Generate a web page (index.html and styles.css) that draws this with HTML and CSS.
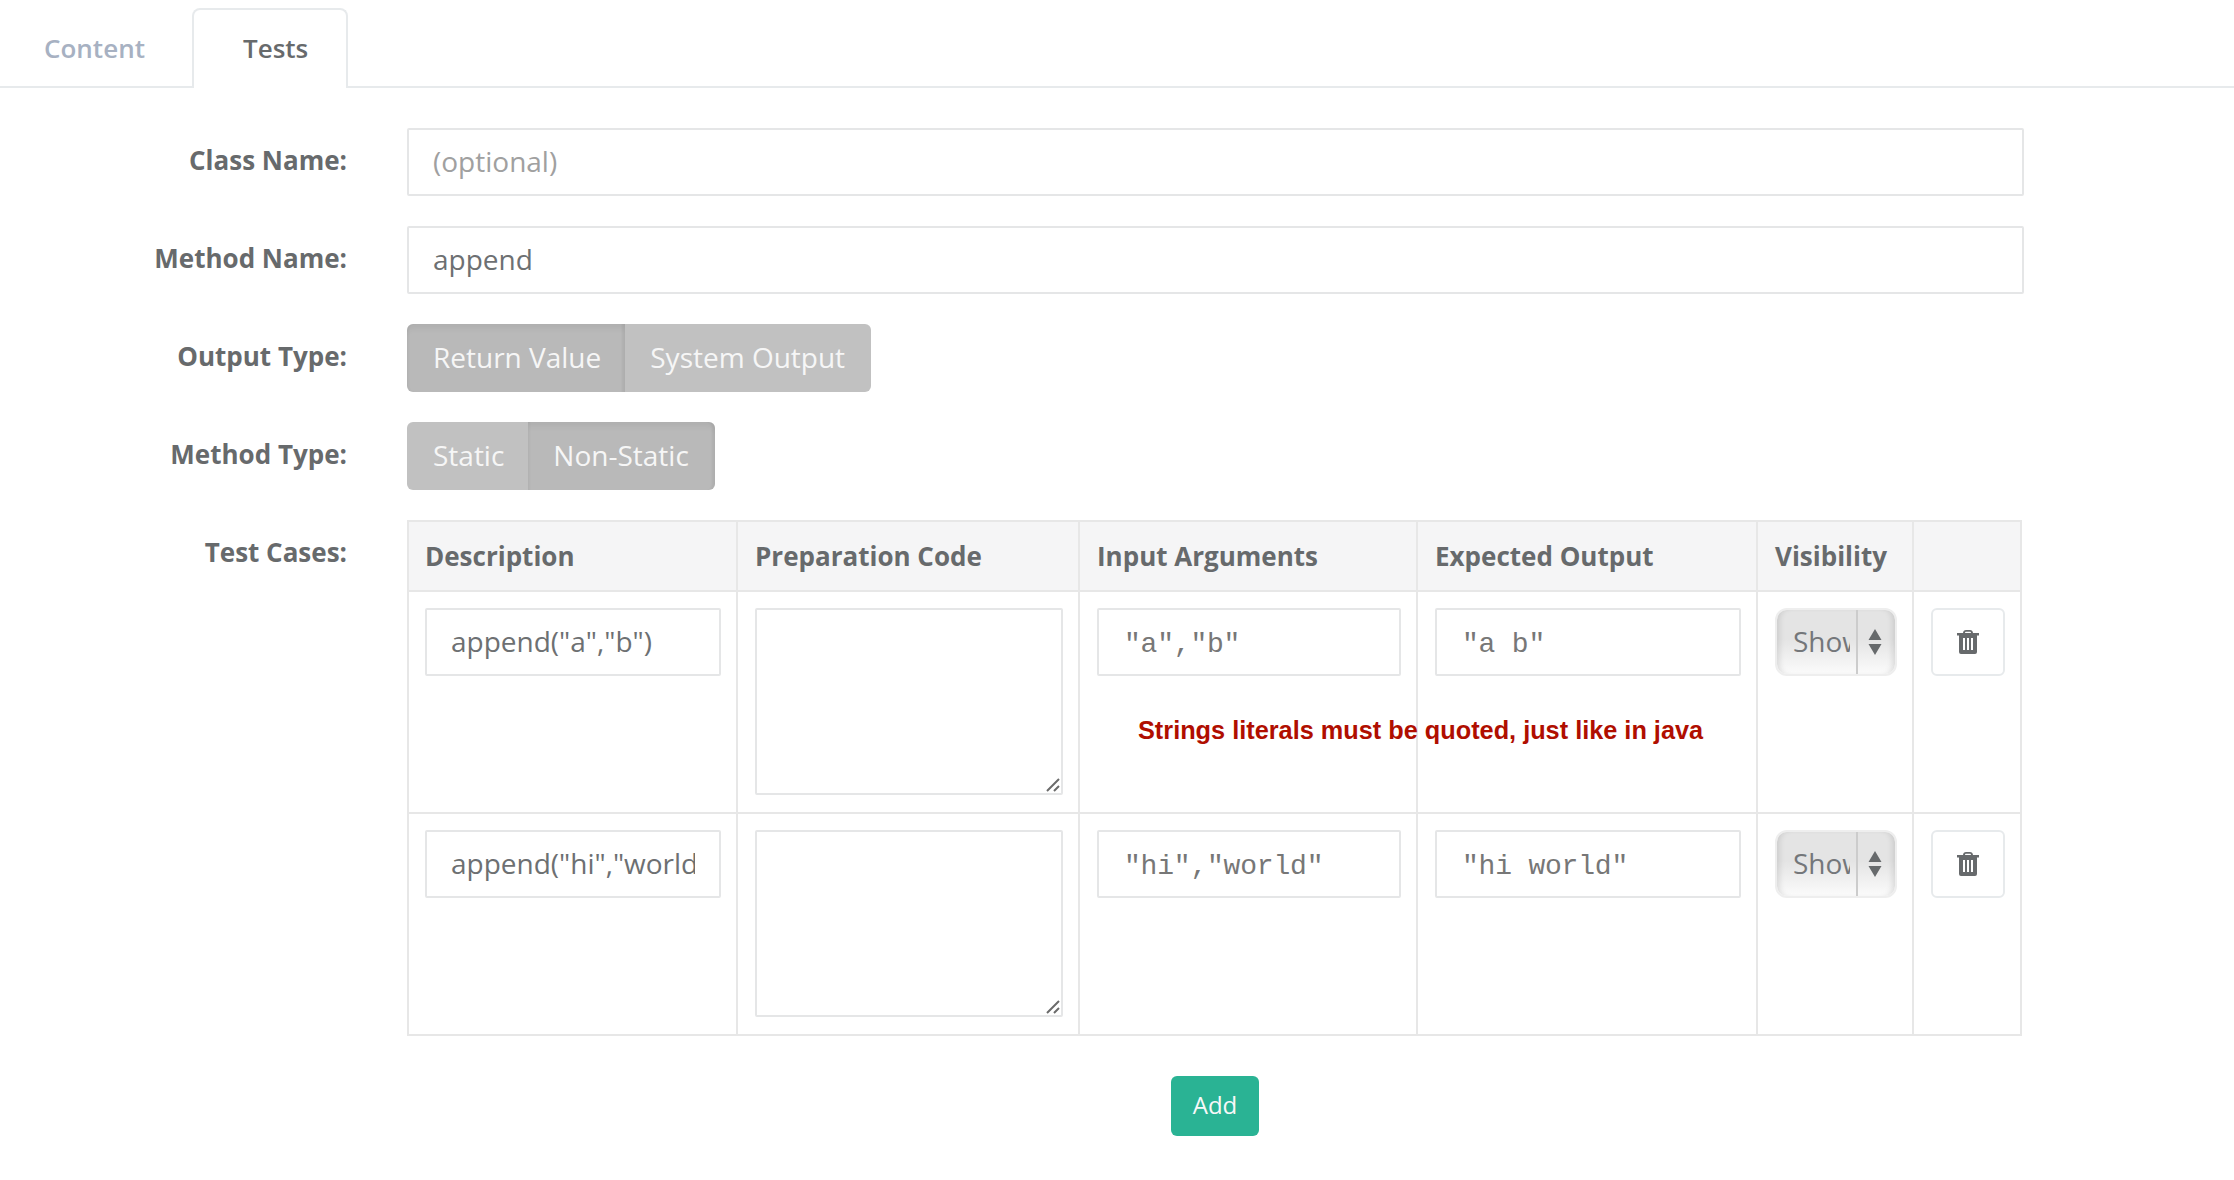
FILE: index.html
```html
<!DOCTYPE html>
<html lang="en">
<head>
  <meta charset="UTF-8" />
  <title>Tests</title>
  <link rel="stylesheet" href="styles.css">
</head>
<body>
  <ul class="tabs">
    <li class="tab">Content</li>
    <li class="tab active">Tests</li>
  </ul>

  <form class="test-form">
    <div class="form-row">
      <label class="form-label">Class Name:</label>
      <input type="text" class="form-input" placeholder="(optional)" />
    </div>
    <div class="form-row">
      <label class="form-label">Method Name:</label>
      <input type="text" class="form-input" value="append" />
    </div>
    <div class="form-row">
      <label class="form-label">Output Type:</label>
      <div class="btn-group">
        <span class="toggle selected">Return Value</span>
        <span class="toggle">System Output</span>
      </div>
    </div>
    <div class="form-row">
      <label class="form-label">Method Type:</label>
      <div class="btn-group">
        <span class="toggle">Static</span>
        <span class="toggle selected">Non-Static</span>
      </div>
    </div>
    <div class="form-row">
      <label class="form-label">Test Cases:</label>
      <table class="cases">
        <colgroup>
          <col class="col-desc" />
          <col class="col-prep" />
          <col class="col-args" />
          <col class="col-out" />
          <col class="col-vis" />
          <col class="col-del" />
        </colgroup>
        <thead>
          <tr>
            <th>Description</th>
            <th>Preparation Code</th>
            <th>Input Arguments</th>
            <th>Expected Output</th>
            <th>Visibility</th>
            <th></th>
          </tr>
        </thead>
        <tbody>
          <tr>
            <td><input type="text" class="cell-input" value='append("a","b")' /></td>
            <td>
              <div class="code-wrap">
                <textarea class="cell-code"></textarea>
                <svg class="grip" width="14" height="14" viewBox="0 0 14 14"><path d="M1 13L13 1M8 13l5-5" /></svg>
              </div>
            </td>
            <td class="args-cell">
              <input type="text" class="cell-input mono" value='"a","b"' />
              <span class="hint">Strings literals must be quoted, just like in java</span>
            </td>
            <td><input type="text" class="cell-input mono" value='"a b"' /></td>
            <td>
              <div class="vis-select">
                <span class="vis-value">Show</span>
                <span class="vis-arrows">
                  <svg width="14" height="26" viewBox="0 0 14 26"><path d="M7 0l6.500 11H.5zM7 26L.5 15h13z" /></svg>
                </span>
              </div>
            </td>
            <td>
              <button type="button" class="del-btn">
                <svg width="22" height="24" viewBox="0 0 22 24"><path fill-rule="evenodd" d="M6 3C6 1.200 7.500 0 9 0h4c1.500 0 3 1.200 3 3h6v2.500h-2V22a2 2 0 0 1-2 2H4a2 2 0 0 1-2-2V5.500H0V3zM8 3h6c0-.7-.5-1.200-1.200-1.200H9.200C8.500 1.800 8 2.300 8 3zM6 8v12h2V8zM10 8v12h2V8zM14 8v12h2V8z" /></svg>
              </button>
            </td>
          </tr>
          <tr>
            <td><input type="text" class="cell-input" value='append("hi","world")' /></td>
            <td>
              <div class="code-wrap">
                <textarea class="cell-code"></textarea>
                <svg class="grip" width="14" height="14" viewBox="0 0 14 14"><path d="M1 13L13 1M8 13l5-5" /></svg>
              </div>
            </td>
            <td><input type="text" class="cell-input mono" value='"hi","world"' /></td>
            <td><input type="text" class="cell-input mono" value='"hi world"' /></td>
            <td>
              <div class="vis-select">
                <span class="vis-value">Show</span>
                <span class="vis-arrows">
                  <svg width="14" height="26" viewBox="0 0 14 26"><path d="M7 0l6.500 11H.5zM7 26L.5 15h13z" /></svg>
                </span>
              </div>
            </td>
            <td>
              <button type="button" class="del-btn">
                <svg width="22" height="24" viewBox="0 0 22 24"><path fill-rule="evenodd" d="M6 3C6 1.200 7.500 0 9 0h4c1.500 0 3 1.200 3 3h6v2.500h-2V22a2 2 0 0 1-2 2H4a2 2 0 0 1-2-2V5.500H0V3zM8 3h6c0-.7-.5-1.200-1.200-1.200H9.200C8.500 1.800 8 2.300 8 3zM6 8v12h2V8zM10 8v12h2V8zM14 8v12h2V8z" /></svg>
              </button>
            </td>
          </tr>
        </tbody>
      </table>
    </div>
    <div class="form-actions">
      <button type="button" class="add-btn">Add</button>
    </div>
  </form>
</body>
</html>
```

FILE: styles.css
```css
* {
  box-sizing: border-box;
}
body {
  margin: 0;
  background: #fff;
  color: #676a6c;
  font-family: "Open Sans", sans-serif;
  font-size: 28px;
}
.tabs {
  display: flex;
  height: 88px;
  margin: 0;
  padding: 8px 0 0 0;
  list-style: none;
  border-bottom: 2px solid #e7eaec;
}
.tab {
  width: 192px;
  padding-top: 22px;
  padding-left: 44px;
  font-size: 26px;
  font-weight: 600;
  color: #a7b1c2;
}
.tab.active {
  width: 156px;
  height: 80px;
  padding-top: 20px;
  padding-left: 49px;
  color: #676a6c;
  background: #fff;
  border: 2px solid #e7eaec;
  border-bottom: 0;
  border-radius: 8px 8px 0 0;
}
.test-form {
  width: 2024px;
  padding-top: 40px;
}
.form-row {
  display: grid;
  grid-template-columns: 347px 1fr;
  column-gap: 60px;
  margin-bottom: 30px;
}
.form-label {
  padding-top: 14px;
  text-align: right;
  font-size: 26px;
  font-weight: 700;
  line-height: 36px;
}
.form-input,
.cell-input {
  width: 100%;
  height: 68px;
  padding: 0 24px 2px;
  font-family: inherit;
  font-size: 28px;
  color: #6d7072;
  border: 2px solid #e5e6e7;
  border-radius: 2px;
  outline: none;
}
.form-input::placeholder {
  color: #a0a0a0;
}
.btn-group {
  display: flex;
  height: 68px;
}
.toggle {
  display: flex;
  align-items: center;
  padding: 0 25px 2px;
  color: #f6f6f6;
  background: #c1c1c1;
}
.toggle:first-child {
  padding-left: 26px;
  padding-right: 24px;
  border-radius: 6px 0 0 6px;
}
.toggle:last-child {
  padding-left: 25px;
  padding-right: 26px;
  border-radius: 0 6px 6px 0;
}
.toggle.selected {
  background: #b9b9b9;
  box-shadow: inset 0 8px 6px -4px rgba(0, 0, 0, 0.06), inset 3px 0 2px -1px rgba(0, 0, 0, 0.03), inset -5px 0 2px -2px rgba(0, 0, 0, 0.05);
}
.cases {
  width: 1613px;
  table-layout: fixed;
  border-collapse: collapse;
  border: 2px solid #e7e7e7;
}
.col-desc { width: 329px; }
.col-prep { width: 342px; }
.col-args { width: 338px; }
.col-out { width: 340px; }
.col-vis { width: 156px; }
.col-del { width: 108px; }
.cases th {
  height: 70px;
  padding: 0 15px 0 17px;
  text-align: left;
  font-size: 26px;
  font-weight: 700;
  background: #f5f5f6;
  border: 2px solid #e7e7e7;
}
.cases td {
  height: 222px;
  padding: 16px 15px 16px 17px;
  vertical-align: top;
  border: 2px solid #e7e7e7;
}
.cases th:first-child,
.cases td:first-child {
  padding-left: 16px;
}
.code-wrap {
  position: relative;
  height: 187px;
}
.cell-code {
  display: block;
  width: 100%;
  height: 187px;
  resize: none;
  border: 2px solid #e5e6e7;
  border-radius: 2px;
  outline: none;
}
.grip {
  position: absolute;
  right: 3px;
  bottom: 3px;
  fill: none;
  stroke: #6b6b6b;
  stroke-width: 2;
}
.mono {
  padding-top: 5px;
  padding-left: 25px;
  padding-bottom: 0;
  font-family: "Liberation Mono", monospace;
  letter-spacing: -0.2px;
  color: #777;
}
.args-cell {
  position: relative;
}
.hint {
  position: absolute;
  left: 58px;
  top: 124px;
  white-space: nowrap;
  font-family: "Liberation Sans", sans-serif;
  font-size: 25.300px;
  font-weight: 700;
  color: #b00e00;
}
.vis-select {
  display: flex;
  width: 122px;
  height: 68px;
  border: 2px solid #eee;
  border-radius: 12px;
  background: linear-gradient(#e4e4e4, #e4e4e4 45%, #fbfbfb);
  box-shadow: inset 6px 0 6px -4px rgba(0, 0, 0, 0.12), inset -6px 0 6px -4px rgba(0, 0, 0, 0.12);
}
.vis-value {
  width: 79px;
  padding-left: 16px;
  color: #74777a;
  line-height: 62px;
  overflow: hidden;
  white-space: nowrap;
  clip-path: inset(0 6px 0 0);
}
.vis-arrows {
  display: flex;
  flex: 1;
  align-items: center;
  justify-content: center;
  padding-right: 3px;
  border-left: 2px solid #ccc;
}
.vis-arrows svg {
  fill: #676a6c;
}
.del-btn {
  display: flex;
  align-items: center;
  justify-content: center;
  width: 74px;
  height: 68px;
  padding: 0;
  background: #fff;
  border: 2px solid #e7eaec;
  border-radius: 6px;
}
.del-btn svg {
  fill: #676a6c;
}
.form-actions {
  display: flex;
  justify-content: center;
  padding-left: 406px;
  margin-top: 40px;
  padding-bottom: 44px;
}
.add-btn {
  width: 88px;
  height: 60px;
  padding: 0 0 3px;
  font-family: inherit;
  font-size: 24px;
  color: #f8f8f8;
  background: #2ab394;
  border: 0;
  border-radius: 6px;
}
```
